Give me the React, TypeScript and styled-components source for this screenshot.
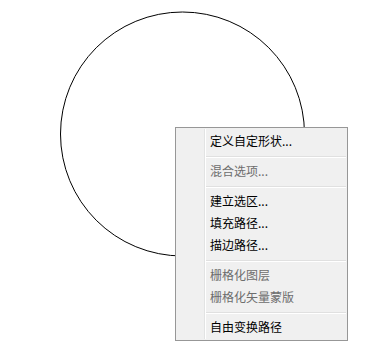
import styled, { createGlobalStyle } from 'styled-components';

const GlobalStyle = createGlobalStyle`
  html, body {
    margin: 0;
    padding: 0;
    background: #ffffff;
  }
`;

const Canvas = styled.div`
  position: relative;
  width: 389px;
  height: 347px;
  overflow: hidden;
  background: #ffffff;
`;

const Shape = styled.svg`
  position: absolute;
  left: 59px;
  top: 11px;
`;

const Menu = styled.div`
  position: absolute;
  left: 175px;
  top: 127px;
  width: 171px;
  padding: 3px 0 1px;
  display: flex;
  flex-direction: column;
  background: #f0f0f0;
  border: 1px solid #979797;
  font-family: 'Noto Sans CJK SC', 'Noto Sans', sans-serif;
  font-size: 12px;

  &::before {
    content: '';
    position: absolute;
    top: 1px;
    bottom: 1px;
    left: 28px;
    width: 1px;
    background: #e2e3e3;
    border-right: 1px solid #ffffff;
  }
`;

const Item = styled.div<{ $disabled?: boolean }>`
  height: 22px;
  line-height: 20px;
  padding-left: 34px;
  color: ${(props): string => (props.$disabled ? '#6d6d6d' : '#000000')};
  white-space: nowrap;
`;

const Separator = styled.div`
  height: 8px;
  display: flex;
  align-items: center;
  padding: 0 1px 0 30px;

  &::after {
    content: '';
    flex: 1;
    height: 1px;
    background: #e0e0e0;
    border-bottom: 1px solid #ffffff;
  }
`;

type Entry = { label: string; disabled?: boolean } | 'sep';

const entries: Entry[] = [
  { label: '定义自定形状...' },
  'sep',
  { label: '混合选项...', disabled: true },
  'sep',
  { label: '建立选区...' },
  { label: '填充路径...' },
  { label: '描边路径...' },
  'sep',
  { label: '栅格化图层', disabled: true },
  { label: '栅格化矢量蒙版', disabled: true },
  'sep',
  { label: '自由变换路径' },
];

export default function App(): JSX.Element {
  return (
    <Canvas>
      <GlobalStyle />
      <Shape width="247" height="247" viewBox="0 0 247 247">
        <circle cx="123.5" cy="123" r="122" fill="none" stroke="#000" strokeWidth="1" />
      </Shape>
      <Menu>
        {entries.map((entry, i) =>
          entry === 'sep' ? (
            <Separator key={i} />
          ) : (
            <Item key={i} $disabled={entry.disabled}>
              {entry.label}
            </Item>
          ),
        )}
      </Menu>
    </Canvas>
  );
}
